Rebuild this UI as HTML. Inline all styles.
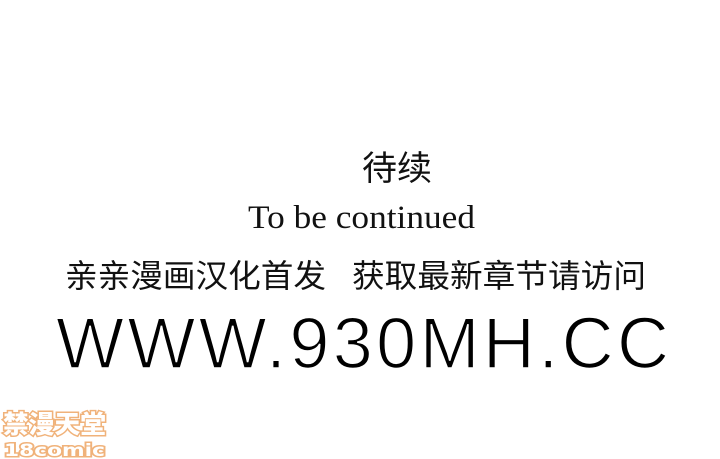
<!DOCTYPE html>
<html><head><meta charset="utf-8"><style>
html,body{margin:0;padding:0;background:#fff;width:720px;height:459px;overflow:hidden}
</style></head><body>
<svg width="720" height="459" xmlns="http://www.w3.org/2000/svg" style="display:block">
<rect width="720" height="459" fill="#fff"/>
<text x="362" y="180" font-family="Noto Sans CJK SC, sans-serif" font-size="34" fill="#111" textLength="70" lengthAdjust="spacingAndGlyphs">待续</text>
<text x="248" y="228" font-family="Liberation Serif, serif" font-size="33" fill="#111" textLength="227" lengthAdjust="spacingAndGlyphs">To be continued</text>
<text x="65" y="287" font-family="Noto Sans CJK SC, sans-serif" font-size="32" fill="#111" textLength="261" lengthAdjust="spacingAndGlyphs">亲亲漫画汉化首发</text>
<text x="352" y="287" font-family="Noto Sans CJK SC, sans-serif" font-size="32" fill="#111" textLength="294" lengthAdjust="spacingAndGlyphs">获取最新章节请访问</text>
<text x="56" y="368" font-family="Liberation Sans, sans-serif" font-size="72" fill="#000" stroke="#fff" stroke-width="1.6" textLength="613" lengthAdjust="spacing">WWW.930MH.CC</text>
<text x="3" y="433" font-family="Noto Sans CJK SC, sans-serif" font-weight="900" font-size="25" fill="#fff" stroke="#f0b27a" stroke-width="3" paint-order="stroke" textLength="103" lengthAdjust="spacingAndGlyphs">禁漫天堂</text>
<text x="4" y="456" font-family="DejaVu Sans, sans-serif" font-weight="bold" font-size="17" fill="#fff" stroke="#f0b27a" stroke-width="3" paint-order="stroke" textLength="101" lengthAdjust="spacingAndGlyphs">18comic</text>
</svg>
</body></html>
